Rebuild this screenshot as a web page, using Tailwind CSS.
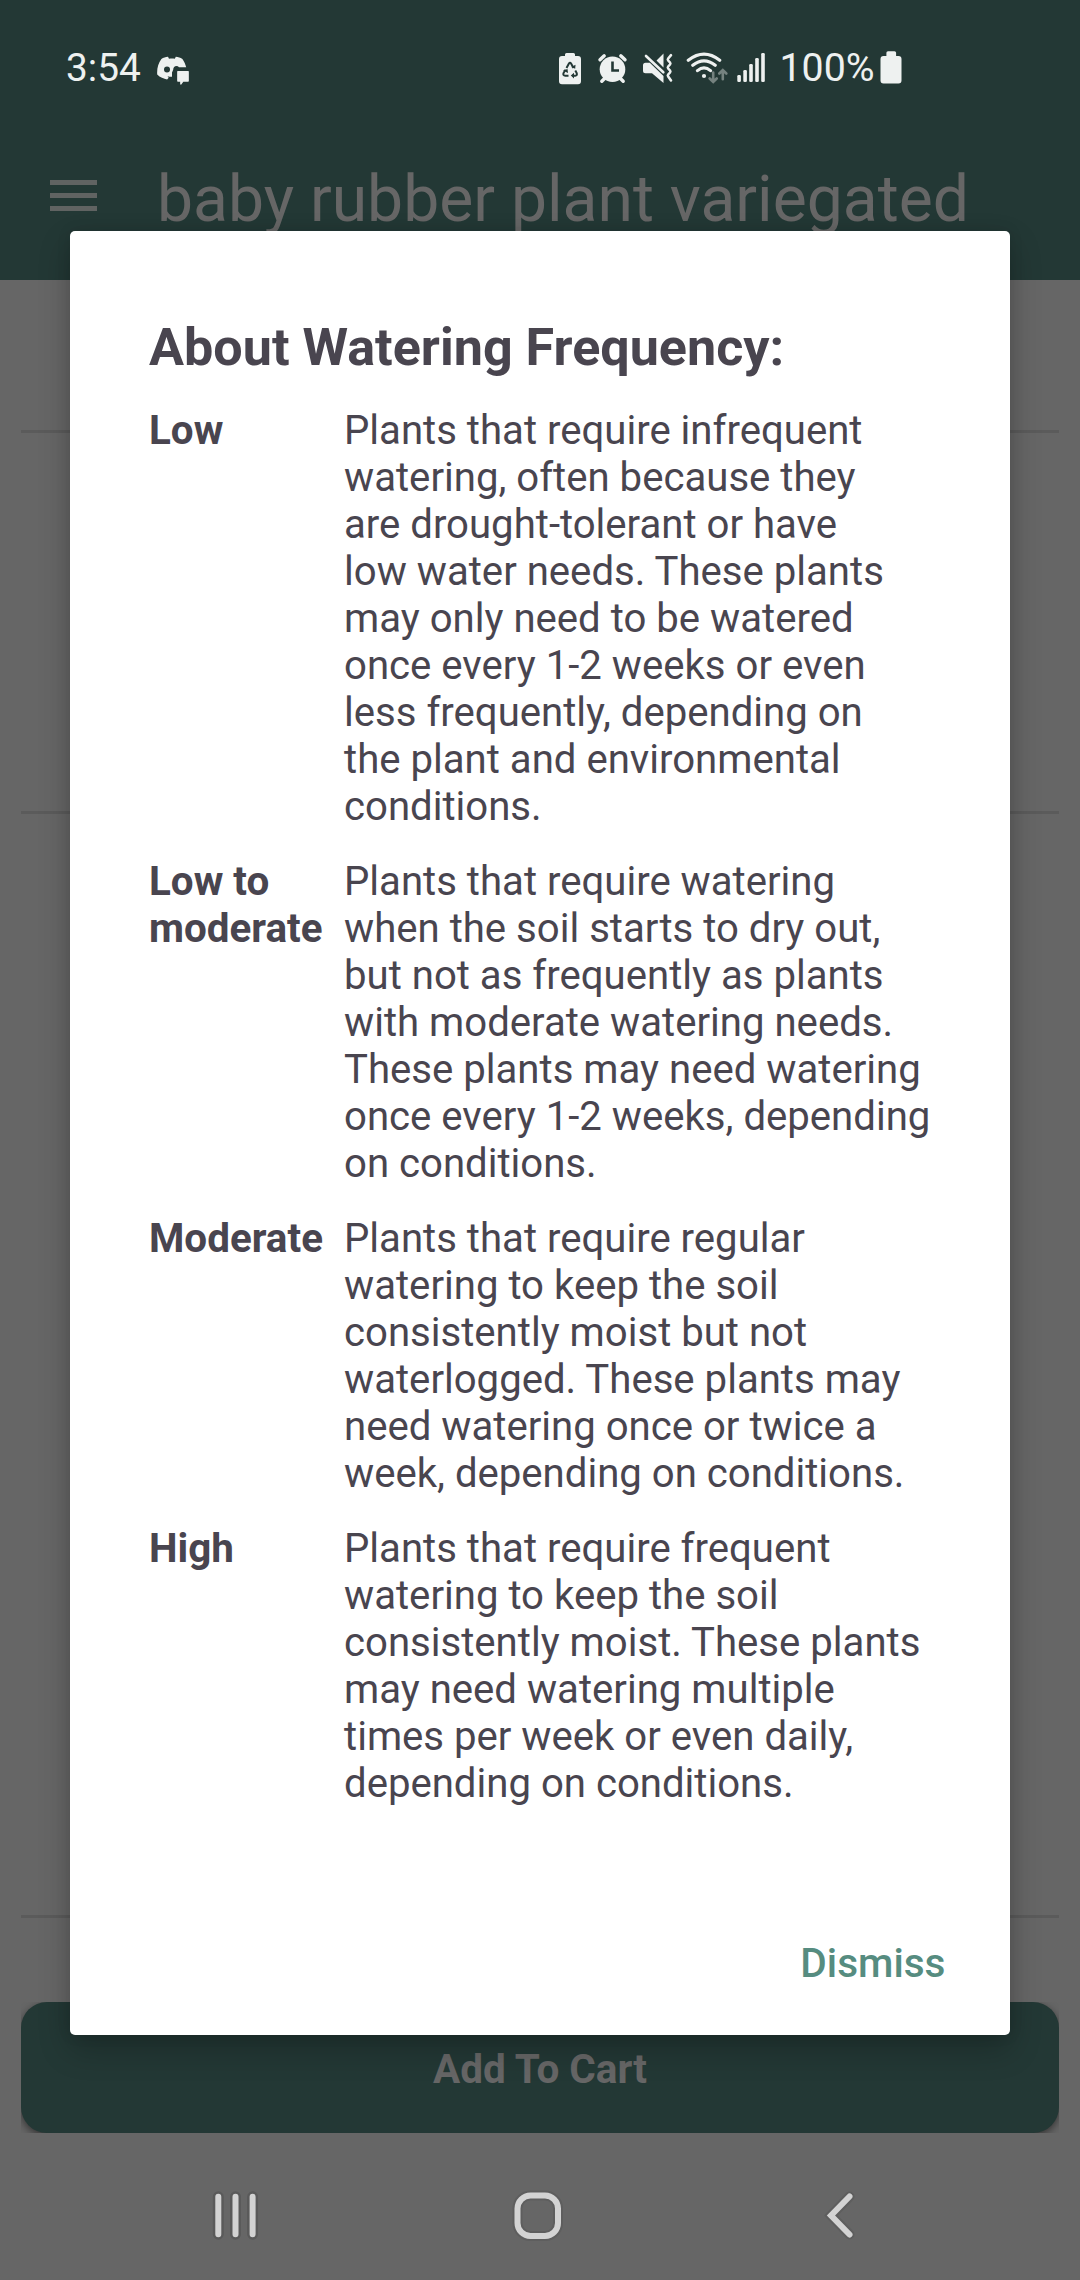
<!DOCTYPE html>
<html lang="en">
<head>
<meta charset="utf-8">
<title>baby rubber plant variegated</title>
<script src="https://cdn.jsdelivr.net/npm/@tailwindcss/browser@4"></script>
</head>
<body class="font-[Roboto,sans-serif]">
<div class="relative flex h-[2280px] w-[1080px] flex-col overflow-hidden bg-[#666666]">

  <div class="flex flex-col bg-[#233835]">
    <!-- Status bar -->
    <div class="flex h-[136px] items-center pr-[178px] pl-[66px] text-[#eef1f0]">
      <div class="w-[91px] text-[38.8px] leading-[46px]">3:54</div>
      <svg class="h-9 w-[34px]" viewBox="157 50 34 36" fill="currentColor">
        <path d="M157.2 74.5c-.4-6 1-11.200 4.200-15.600 2-1.200 4.200-1.900 6.600-2.100l1 1.900c2-.3 3.900-.3 5.800 0l1-1.900c2.400.2 4.600.9 6.600 2.100 1.800 2.500 3.100 5.300 3.800 8.400H179a3.300 3.300 0 0 0-2.500-1.200c-1.900 0-3.300 1.600-3.300 3.700l-1.200 2.600v4.300h-2.500l-2-.4 1.200 1.500-1.600 1.600c-3.200-.8-7.200-2-9.900-4.900z"/>
        <circle cx="167" cy="69.500" r="3" fill="#233835"/>
        <path d="M177.800 71.500h10.400v9.600h-5.200l-2.200 3v-3h-3z" stroke="currentColor" stroke-width="1.200" stroke-linejoin="round"/>
      </svg>
      <div class="ml-auto flex items-center">
        <svg class="h-9 w-6" viewBox="558 50 24 36" fill="currentColor">
          <path d="M566.500 53h7q1.500 0 1.500 1.500V56h3q3 0 3 3v22.300q0 3-3 3h-16q-3 0-3-3V59q0-3 3-3h3v-1.500q0-1.500 1.500-1.500z"/>
          <g fill="none" stroke="#233835" stroke-width="2"><path d="M566.500 68l2.300-4.300q1.200-1.800 2.400 0l2.300 4.300M575.300 70.500l1.400 2.600q.8 2.400-1.500 2.600h-2.700M568.500 75.700h-3.200q-2.600-.2-1.800-2.600l2-3.300"/></g>
          <path fill="#233835" d="M571.300 67l3.900 1.800.3-4zM574 72.800v5.600l-3.200-2.800zM563 70.500l4.500-1.500.5 4z"/>
        </svg>
        <svg class="ml-[15px] h-9 w-8" viewBox="597 50 32 36" fill="none" stroke="currentColor" stroke-width="3.400" stroke-linecap="round">
          <circle cx="612.500" cy="69.300" r="12.800" fill="currentColor" stroke="none"/>
          <path d="M600 59.800l4.200-4M625 59.800l-4.200-4M601.800 81.300l3-3M623.200 81.300l-3-3"/>
          <path stroke="#233835" stroke-width="2.600" stroke-linecap="butt" d="M612.500 61.500v9h6.500"/>
        </svg>
        <svg class="ml-[13px] h-9 w-[31px]" viewBox="642 50 31 36">
          <path fill="currentColor" d="M656.500 60.500l7-7v14zM645.500 62.700h4.300L663.500 76v7L652 73.200h-6.500q-2.500 0-2.500-2.500v-5.500q0-2.500 2.500-2.500z"/>
          <path fill="none" stroke="currentColor" stroke-width="2.600" stroke-linecap="round" d="M646 56l17.300 16.300M671 55.200l-2.800 3.300q-.8 1 0 2l1.800 2q.8 1 0 2l-1.800 2q-.8 1 0 2l1.800 2q.8 1 0 2l-1.800 2q-.8 1 0 2l2.800 4"/>
        </svg>
        <svg class="ml-[13px] h-9 w-[42px]" viewBox="686 50 42 36" fill="none" stroke="currentColor" stroke-width="3.200" stroke-linecap="round">
          <path d="M688.300 60.300q15.700-12.200 31.400 0M692.800 65.300q11.200-9 22.400 0M697.500 70.600q6.500-5.600 13 0"/>
          <circle cx="704" cy="76" r="2.100" fill="currentColor" stroke="none"/>
          <path stroke="#75827f" stroke-width="2.600" d="M713.200 72.500v9M709.700 78.500l3.500 3.500 3.500-3.500M722.800 79.300v-9M719.300 73.500l3.500-3.500 3.500 3.500"/>
        </svg>
        <svg class="ml-2 h-9 w-[30px]" viewBox="736 50 30 36" fill="currentColor">
          <rect x="737.300" y="75" width="3.600" height="7" rx="1.300"/><rect x="743.300" y="70" width="3.600" height="12" rx="1.300"/><rect x="749.200" y="64" width="3.600" height="18" rx="1.300"/><rect x="755.200" y="58" width="3.600" height="24" rx="1.300"/><rect x="761.200" y="53" width="3.600" height="29" rx="1.300"/>
        </svg>
        <div class="ml-[13.5px] w-[100px] text-[39.3px] leading-[46px]">100%</div>
        <svg class="h-9 w-[22.5px]" viewBox="879.5 50 22.5 36" fill="currentColor">
          <path d="M887.500 51.200h6.500q1.600 0 1.600 1.600v3.100h2.400q3 0 3 3v21.600q0 3-3 3h-15q-3 0-3-3V58.900q0-3 3-3h2.900v-3.100q0-1.600 1.600-1.600z"/>
        </svg>
      </div>
    </div>
    <!-- App bar -->
    <div class="flex h-36 items-start pt-[26px] pl-[50px] text-[#666666]">
      <svg class="mt-[18px] h-[31px] w-[47px]" viewBox="0 0 47 31" fill="#606362"><path d="M0 0h47v5H0zM0 13h47v5H0zM0 26h47v5H0z"/></svg>
      <div class="ml-[60px] text-[64.2px] leading-[75px] whitespace-nowrap">baby rubber plant variegated</div>
    </div>
  </div>

  <!-- Page sections -->
  <div class="flex flex-1 flex-col px-[21px]">
    <div class="h-[153px] border-b-[3px] border-[#5b5b5b]"></div>
    <div class="h-[381px] border-b-[3px] border-[#5b5b5b]"></div>
    <div class="h-[1104px] border-b-[3px] border-[#5b5b5b]"></div>
    <div class="mt-[84px] overflow-hidden">
      <div class="flex h-[131px] items-center justify-center rounded-[26px] bg-[#233835] pt-0.5 text-[40.5px] leading-[46px] font-bold text-[#666666] shadow-[0_3px_8px_rgba(0,0,0,0.5)]">Add To Cart</div>
    </div>
  </div>

  <!-- System navigation -->
  <div class="flex h-[147px] items-start pt-[55px] pl-[210px]">
    <svg class="h-14 w-[50px]" viewBox="210 2188 50 56" fill="none" stroke-linecap="round">
      <path stroke="#5a5a5a" stroke-width="11" d="M218.300 2196.800v37.400M235.500 2196.800v37.400M252.600 2196.800v37.400"/>
      <path stroke="#d3d3d3" stroke-width="6" d="M218.300 2196.800v37.400M235.500 2196.800v37.400M252.600 2196.800v37.400"/>
    </svg>
    <svg class="ml-[250px] h-14 w-14" viewBox="510 2188 56 56" fill="none">
      <rect x="517.500" y="2195.500" width="40.500" height="40.500" rx="13" stroke="#5e5e5e" stroke-width="10"/>
      <rect x="517.500" y="2195.500" width="40.500" height="40.500" rx="13" stroke="#d3d3d3" stroke-width="6"/>
    </svg>
    <svg class="ml-[254px] h-14 w-10" viewBox="820 2188 40 56" fill="none" stroke-linecap="round">
      <path stroke="#5e5e5e" stroke-width="10" d="M849.500 2196.500L831 2215.500l18.500 19"/>
      <path stroke="#d3d3d3" stroke-width="6" d="M849.500 2196.500L831 2215.500l18.500 19"/>
    </svg>
  </div>

  <!-- Dialog -->
  <div class="absolute top-[231px] left-[70px] flex h-[1804px] w-[940px] flex-col rounded-[5px] bg-white pt-[86px] pl-[79px] text-[#49454f] shadow-[0_14px_32px_rgba(0,0,0,0.24),0_0_14px_rgba(0,0,0,0.1)]">
    <h1 class="text-[52.1px] leading-[62px] font-bold whitespace-nowrap">About Watering Frequency:</h1>
    <dl class="mt-[28px] grid grid-cols-[195px_1fr] gap-y-7 text-[40.14px] leading-[47px] whitespace-nowrap">
      <dt class="text-[40.4px] font-bold leading-[47px]">Low</dt>
      <dd>Plants that require infrequent<br>watering, often because they<br>are drought-tolerant or have<br>low water needs. These plants<br>may only need to be watered<br>once every 1-2 weeks or even<br>less frequently, depending on<br>the plant and environmental<br>conditions.</dd>
      <dt class="text-[40.4px] font-bold leading-[47px]">Low to<br>moderate</dt>
      <dd>Plants that require watering<br>when the soil starts to dry out,<br>but not as frequently as plants<br>with moderate watering needs.<br>These plants may need watering<br>once every 1-2 weeks, depending<br>on conditions.</dd>
      <dt class="text-[40.4px] font-bold leading-[47px]">Moderate</dt>
      <dd>Plants that require regular<br>watering to keep the soil<br>consistently moist but not<br>waterlogged. These plants may<br>need watering once or twice a<br>week, depending on conditions.</dd>
      <dt class="text-[40.4px] font-bold leading-[47px]">High</dt>
      <dd>Plants that require frequent<br>watering to keep the soil<br>consistently moist. These plants<br>may need watering multiple<br>times per week or even daily,<br>depending on conditions.</dd>
    </dl>
    <button class="mt-auto mr-[64.5px] mb-[49px] self-end text-[40.6px] leading-[46px] font-medium text-[#568c80]">Dismiss</button>
  </div>
</div>
</body>
</html>
